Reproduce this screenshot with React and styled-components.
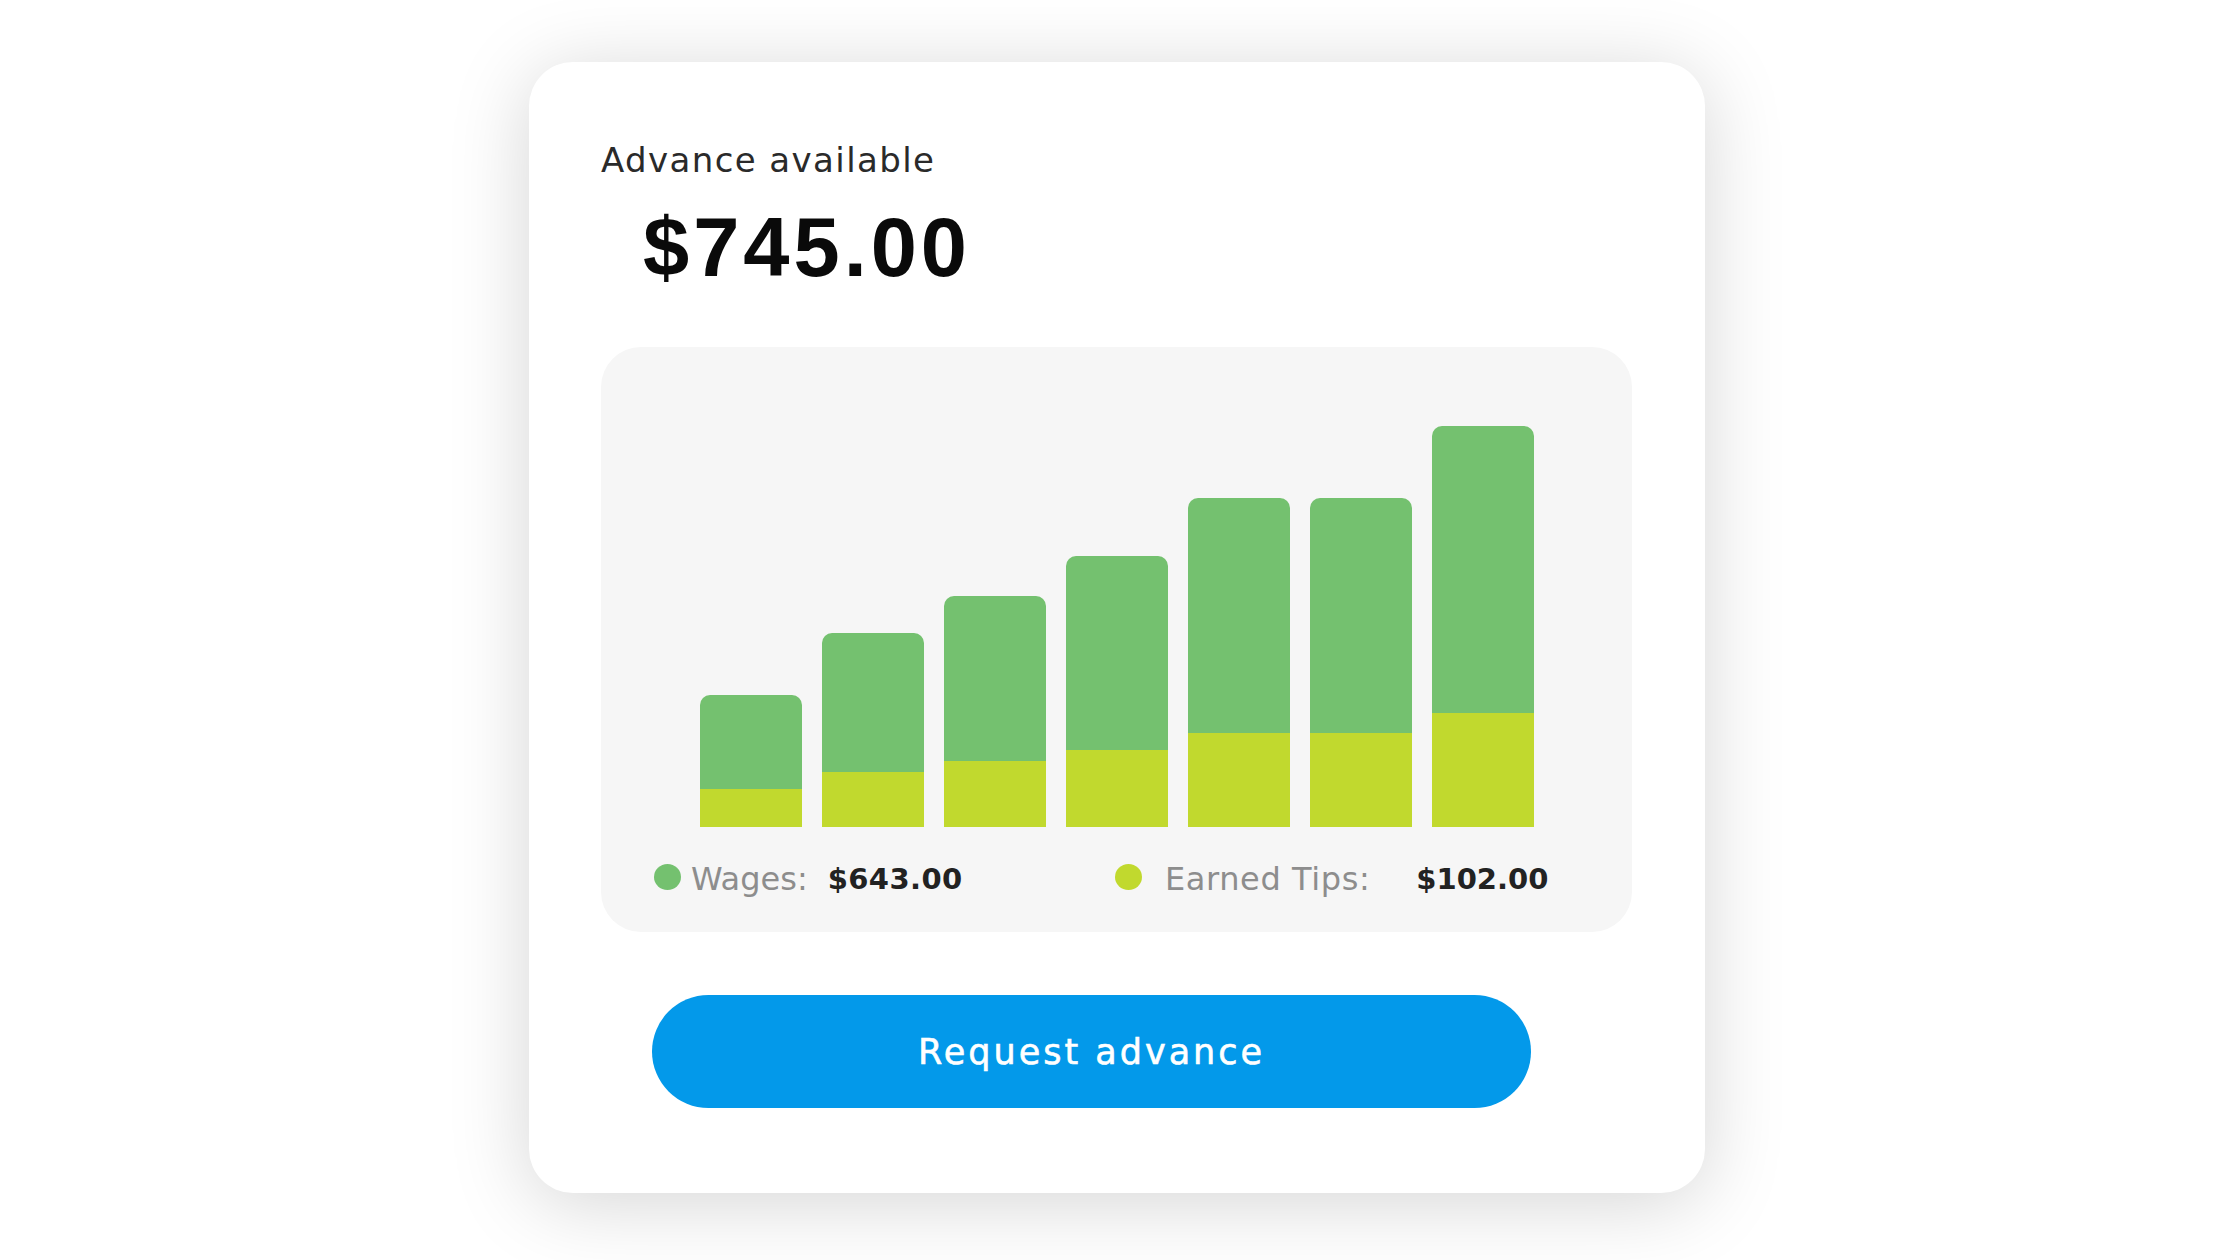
import React from "react";
import styled, { createGlobalStyle } from "styled-components";

const Global = createGlobalStyle`
  html, body { margin: 0; padding: 0; background: #ffffff; }
  body { font-family: "DejaVu Sans", "Liberation Sans", sans-serif; }
`;

const Page = styled.div`
  width: 2240px;
  height: 1260px;
  box-sizing: border-box;
  padding: 62px 0 0 529px;
  overflow: hidden;
`;

const Card = styled.div`
  width: 1176px;
  box-sizing: border-box;
  padding: 78px 72px 85px 72px;
  background: #ffffff;
  border-radius: 44px;
  box-shadow: 0 10px 80px rgba(0, 0, 0, 0.17);
  display: flex;
  flex-direction: column;
`;

const Caption = styled.div`
  font-family: "DejaVu Sans", sans-serif;
  font-size: 34px;
  line-height: 1.2;
  letter-spacing: 1.4px;
  color: #2a2a2a;
`;

const Amount = styled.div`
  margin: 17px 0 0 42px;
  font-family: "Liberation Sans", Arial, sans-serif;
  font-weight: 700;
  font-size: 83px;
  line-height: 1.2;
  letter-spacing: 4px;
  color: #0a0a0a;
`;

const Panel = styled.div`
  margin-top: 50px;
  width: 1031px;
  height: 585px;
  box-sizing: border-box;
  background: #f6f6f6;
  border-radius: 40px;
  padding: 79px 0 0 0;
  display: flex;
  flex-direction: column;
`;

const Bars = styled.div`
  height: 401px;
  padding-left: 99px;
  display: flex;
  align-items: flex-end;
  gap: 20px;
`;

const Bar = styled.div`
  width: 102px;
  display: flex;
  flex-direction: column;
  border-radius: 10px 10px 0 0;
  overflow: hidden;
`;

const Wage = styled.div`
  flex: 1;
  background: #74c16f;
`;

const Tip = styled.div`
  background: #c1d92e;
`;

const Legend = styled.div`
  margin-top: 33px;
  padding-left: 53px;
  display: grid;
  grid-template-columns: 461px auto;
  align-items: center;
`;

const LegendItem = styled.div`
  display: flex;
  align-items: center;
`;

const Dot = styled.span`
  width: 27px;
  height: 26px;
  border-radius: 50%;
  background: ${(p) => p.$color};
  margin-top: -5px;
  flex: none;
`;

const Label = styled.span`
  margin-left: ${(p) => p.$gap}px;
  font-family: "DejaVu Sans", sans-serif;
  font-size: 32px;
  line-height: 1.2;
  letter-spacing: ${(p) => p.$spacing || 0}px;
  color: #8d8d8d;
`;

const Value = styled.span`
  margin-left: ${(p) => p.$gap}px;
  font-family: "DejaVu Sans", sans-serif;
  font-weight: 700;
  font-size: 29px;
  line-height: 1.2;
  letter-spacing: ${(p) => p.$spacing || 0}px;
  color: #222222;
`;

const Button = styled.button`
  margin: 63px 0 0 51px;
  width: 879px;
  height: 113px;
  border: none;
  border-radius: 57px;
  background: #0399ea;
  color: #ffffff;
  font-family: "DejaVu Sans", sans-serif;
  font-size: 35px;
  letter-spacing: 3px;
  -webkit-text-stroke: 0.6px #ffffff;
  cursor: pointer;
  padding: 0;
`;

const data = [
  { total: 132, tip: 38 },
  { total: 194, tip: 55 },
  { total: 231, tip: 66 },
  { total: 271, tip: 77 },
  { total: 329, tip: 94 },
  { total: 329, tip: 94 },
  { total: 401, tip: 114 },
];

export default function App() {
  return (
    <>
      <Global />
      <Page>
        <Card>
          <Caption>Advance available</Caption>
          <Amount>$745.00</Amount>
          <Panel>
            <Bars>
              {data.map((d, i) => (
                <Bar key={i} style={{ height: d.total }}>
                  <Wage />
                  <Tip style={{ height: d.tip }} />
                </Bar>
              ))}
            </Bars>
            <Legend>
              <LegendItem>
                <Dot $color="#74c16f" />
                <Label $gap={10}>Wages:</Label>
                <Value $gap={20} $spacing={0.4}>$643.00</Value>
              </LegendItem>
              <LegendItem>
                <Dot $color="#c1d92e" />
                <Label $gap={23} $spacing={0.6}>Earned Tips:</Label>
                <Value $gap={46}>$102.00</Value>
              </LegendItem>
            </Legend>
          </Panel>
          <Button>Request advance</Button>
        </Card>
      </Page>
    </>
  );
}
